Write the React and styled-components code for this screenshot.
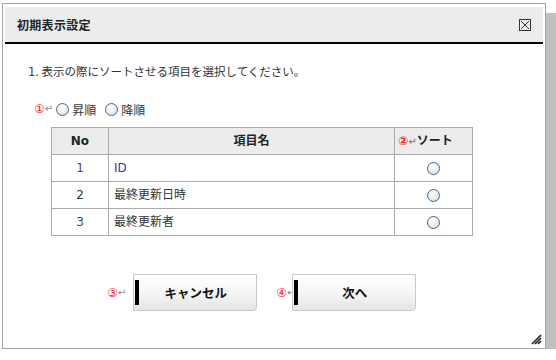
import styled, { createGlobalStyle } from "styled-components";

const Global = createGlobalStyle`
  html, body { margin: 0; padding: 0; background: #fff; }
  body {
    font-family: "DejaVu Sans", "Noto Sans CJK JP", sans-serif;
    font-size: 12px;
    color: #333;
  }
`;

const Page = styled.div`
  padding: 3px 0 0 2px;
`;

const Dialog = styled.div`
  position: relative;
  box-sizing: border-box;
  width: 544px;
  height: 346px;
  border: 1px solid #a6a6a6;
  background: #fff;
  box-shadow: 10px 10px 0 #c0c0c0;
  padding: 3px 2px 0 2px;
`;

const Header = styled.div`
  height: 35px;
  background: #ececec;
  border-bottom: 2px solid #000;
  display: flex;
  align-items: center;
  justify-content: space-between;
  padding: 0 12px;
`;

const Title = styled.div`
  font-family: "Noto Sans CJK JP", sans-serif;
  font-size: 12px;
  font-weight: 700;
  color: #222;
  letter-spacing: 0.3px;
`;

const Close = styled.div`
  box-sizing: border-box;
  width: 12px;
  height: 12px;
  border: 1px solid #333;
  display: flex;
  align-items: center;
  justify-content: center;
`;

const Lead = styled.div`
  margin-top: 19px;
  padding-left: 23px;
  line-height: 16px;
  font-family: "Noto Sans CJK JP", sans-serif;
  font-size: 11.5px;
`;

const Num = styled.span`
  font-family: "DejaVu Sans", sans-serif;
  color: ${({ $color }) => $color || "#333"};
`;

const OrderRow = styled.div`
  margin-top: 21px;
  padding-left: 29px;
  height: 16px;
  display: flex;
  align-items: center;
  font-family: "Noto Sans CJK JP", sans-serif;
`;

const Mark = styled.span`
  color: #ff2020;
  font-family: "DejaVu Sans", sans-serif;
  font-size: 12px;
  line-height: 1;
`;

const Ret = styled.span`
  color: #8a8a8a;
  font-family: "DejaVu Sans", sans-serif;
  font-size: 10px;
  line-height: 1;
  margin-right: ${({ $gap }) => $gap || 0}px;
`;

const Radio = styled.span`
  box-sizing: border-box;
  display: inline-block;
  width: 13px;
  height: 13px;
  border-radius: 50%;
  border: 1px solid #3a6b9c;
  background: radial-gradient(circle at 40% 35%, #fff 0%, #f0f0f0 45%, #d4d4d4 100%);
  margin-right: ${({ $gap }) => $gap || 0}px;
`;

const Label = styled.span`
  margin-right: ${({ $gap }) => $gap || 0}px;
`;

const Table = styled.table`
  margin: 10px 0 0 46px;
  border-collapse: collapse;
  width: 422px;
  font-family: "DejaVu Sans", "Noto Sans CJK JP", sans-serif;
  line-height: 16px;
`;

const Th = styled.th`
  height: 27px;
  box-sizing: border-box;
  padding: 0 0 0 ${({ $pad }) => $pad || 0}px;
  background: #ececec;
  border: 1px solid #aaa;
  font-weight: 700;
  font-size: 12px;
  color: #222;
  text-align: ${({ $align }) => $align || "center"};
  width: ${({ $w }) => $w}px;
`;

const Td = styled.td`
  height: 27px;
  box-sizing: border-box;
  padding: 0 0 0 ${({ $pad }) => $pad || 0}px;
  border: 1px solid #aaa;
  font-size: 12px;
  text-align: ${({ $align }) => $align || "left"};
  color: ${({ $color }) => $color || "#333"};
  vertical-align: middle;
`;

const CellRadio = styled(Radio)`
  vertical-align: middle;
`;

const Buttons = styled.div`
  margin: 38px 0 0 102px;
  display: flex;
  align-items: center;
`;

const Group = styled.div`
  display: flex;
  align-items: center;
  margin-right: ${({ $gap }) => $gap || 0}px;
`;

const Button = styled.div`
  box-sizing: border-box;
  width: 124px;
  height: 37px;
  margin-left: ${({ $ml }) => $ml}px;
  border: 1px solid #c8c8c8;
  border-radius: 0 0 4px 0;
  background: linear-gradient(#ffffff 0%, #f6f6f6 50%, #e4e4e4 100%);
  display: flex;
  align-items: center;
  padding-left: 1px;
`;

const Bar = styled.span`
  width: 4px;
  height: 25px;
  background: #000;
`;

const ButtonText = styled.span`
  flex: 1;
  text-align: center;
  font-family: "Noto Sans CJK JP", sans-serif;
  font-weight: 700;
  font-size: 12.5px;
  color: #111;
  padding-right: 4px;
`;

const Grip = styled.svg`
  position: absolute;
  right: 3px;
  bottom: 3px;
`;

const rows = [
  { no: "1", name: "ID", noColor: "#6a2a8a", nameColor: "#5a2a8a" },
  { no: "2", name: "最終更新日時", noColor: "#333" },
  { no: "3", name: "最終更新者", noColor: "#2a4a8a" },
];

export default function App() {
  return (
    <Page>
      <Global />
      <Dialog>
        <Header>
          <Title>初期表示設定</Title>
          <Close>
            <svg width="10" height="10" viewBox="0 0 10 10">
              <path d="M1 1 L9 9 M9 1 L1 9" stroke="#333" strokeWidth="1" />
            </svg>
          </Close>
        </Header>

        <Lead>
          <Num $color="#3a2a8a">1.</Num> 表示の際にソートさせる項目を選択してください。
        </Lead>

        <OrderRow>
          <Mark>①</Mark>
          <Ret $gap={3}>↵</Ret>
          <Radio $gap={3} />
          <Label $gap={9}>昇順</Label>
          <Radio $gap={3} />
          <Label>降順</Label>
        </OrderRow>

        <Table>
          <thead>
            <tr>
              <Th $w={57}>No</Th>
              <Th $w={287}>項目名</Th>
              <Th $w={78} $align="left" $pad={3}>
                <Mark>②</Mark>
                <Ret>↵</Ret>ソート
              </Th>
            </tr>
          </thead>
          <tbody>
            {rows.map((r) => (
              <tr key={r.no}>
                <Td $align="center" $color={r.noColor}>{r.no}</Td>
                <Td $pad={5} $color={r.nameColor}>{r.name}</Td>
                <Td $align="center">
                  <CellRadio />
                </Td>
              </tr>
            ))}
          </tbody>
        </Table>

        <Buttons>
          <Group $gap={19}>
            <Mark>③</Mark>
            <Ret>↵</Ret>
            <Button $ml={7}>
              <Bar />
              <ButtonText>キャンセル</ButtonText>
            </Button>
          </Group>
          <Group>
            <Mark>④</Mark>
            <Ret>↵</Ret>
            <Button $ml={-3}>
              <Bar />
              <ButtonText>次へ</ButtonText>
            </Button>
          </Group>
        </Buttons>

        <Grip width="11" height="11" viewBox="0 0 11 11">
          <path d="M1 10 L10 1 M4 10 L10 4 M7 10 L10 7" stroke="#222" strokeWidth="1.6" />
        </Grip>
      </Dialog>
    </Page>
  );
}
